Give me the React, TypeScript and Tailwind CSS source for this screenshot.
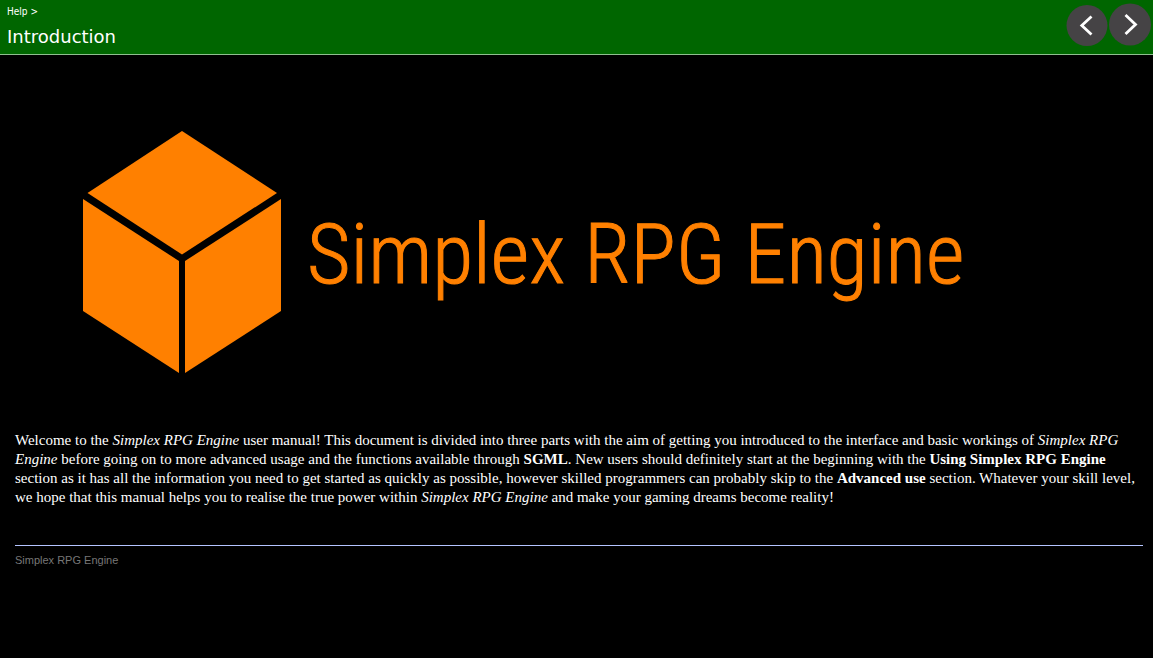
function NavButton({ label, direction }: { label: string; direction: "back" | "forward" }) {
  return (
    <button type="button" aria-label={label} className="block">
      {direction === "back" ? (
        <svg width="42" height="44" viewBox="0 0 42 44" fill="none" className="block">
          <circle cx="21" cy="22.500" r="20.5" fill="#454345" />
          <path d="M25.500 13.500 15.800 22.500 25.500 31.500" stroke="#fff" strokeWidth="2.8" />
        </svg>
      ) : (
        <svg width="42" height="44" viewBox="0 0 42 44" fill="none" className="block">
          <circle cx="21" cy="21.500" r="21" fill="#454345" />
          <path d="M16.500 12 26.500 21.500 16.500 31" stroke="#fff" strokeWidth="2.8" />
        </svg>
      )}
    </button>
  );
}

function CubeLogo() {
  return (
    <svg width="198" height="242" viewBox="0 0 198 242" fill="#ff8000" className="block shrink-0" aria-hidden="true">
      <path d="M99 0 194 62 99 123.500 4.500 62Z" />
      <path d="M0 68 96 130V242L0 180Z" />
      <path d="M198 68 102 130V242L198 180Z" />
    </svg>
  );
}

export default function App() {
  return (
    <div className="min-h-screen bg-black text-white">
      <header className="flex justify-between border-b border-[#8fbf8f] bg-[#006600]">
        <div className="px-[7px] pt-1 pb-[5px]">
          <nav aria-label="Breadcrumb" className="font-['DejaVu_Sans_Condensed','DejaVu_Sans',sans-serif] text-[10px] leading-4">
            <a href="#help">Help</a> &gt;
          </nav>
          <h1 className="pt-[5px] font-['DejaVu_Sans',sans-serif] text-[18px] leading-6">Introduction</h1>
        </div>
        <div className="flex items-start gap-px pt-[3px] pr-[2px]">
          <NavButton label="Previous page" direction="back" />
          <NavButton label="Next page" direction="forward" />
        </div>
      </header>
      <main className="pr-[10px] pl-[15px] font-['Liberation_Serif',serif] text-[15px] leading-[19px]">
        <div className="flex items-center gap-[26px] px-[68px] pt-[76px] pb-[58px]">
          <CubeLogo />
          <h2 className="pt-1.5 font-['Roboto_Condensed','Liberation_Sans_Narrow','Roboto',sans-serif] text-[84px] leading-[98px] font-light whitespace-nowrap text-[#ff8000] [-webkit-text-stroke:1px_#ff8000]">
            Simplex RPG Engine
          </h2>
        </div>
        <p>
          Welcome to the <em>Simplex RPG Engine</em> user manual! This document is divided into three parts with the aim
          of getting you introduced to the interface and basic workings of <em>Simplex RPG Engine</em> before going on to
          more advanced usage and the functions available through <strong>SGML</strong>. New users should definitely
          start at the beginning with the <strong>Using Simplex RPG Engine</strong> section as it has all the information
          you need to get started as quickly as possible, however skilled programmers can probably skip to the{" "}
          <strong>Advanced use</strong> section. Whatever your skill level, we hope that this manual helps you to realise
          the true power within <em>Simplex RPG Engine</em> and make your gaming dreams become reality!
        </p>
        <footer className="mt-[38px] border-t border-[#b4c4ff] pt-1.5 font-['Liberation_Sans',sans-serif] text-[11px] leading-4 text-[#777777]">
          Simplex RPG Engine
        </footer>
      </main>
    </div>
  );
}
